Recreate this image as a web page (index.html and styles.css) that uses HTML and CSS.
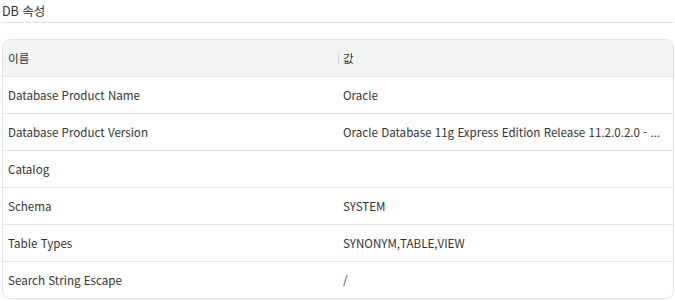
FILE: index.html
```html
<!DOCTYPE html>
<html lang="ko">
<head>
<meta charset="UTF-8">
<title>DB 속성</title>
<link rel="stylesheet" href="styles.css">
</head>
<body>
    <div class="panel">
        <div class="panel-title">DB 속성</div>
        <div class="grid-wrap">
            <table class="prop-grid">
                <thead>
                    <tr>
                        <th>이름</th>
                        <th class="col-value">값</th>
                    </tr>
                </thead>
                <tbody>
                    <tr><td>Database Product Name</td><td>Oracle</td></tr>
                    <tr><td>Database Product Version</td><td>Oracle Database 11g Express Edition Release 11.2.0.2.0 - ...</td></tr>
                    <tr><td>Catalog</td><td></td></tr>
                    <tr><td>Schema</td><td>SYSTEM</td></tr>
                    <tr><td>Table Types</td><td>SYNONYM,TABLE,VIEW</td></tr>
                    <tr><td>Search String Escape</td><td>/</td></tr>
                </tbody>
            </table>
        </div>
    </div>
</body>
</html>
```

FILE: styles.css
```css
body{
    margin: 0;
    background: #ffffff;
    font-family: "Noto Sans CJK KR", "Noto Sans", sans-serif;
    font-size: 11.6px;
    color: #333333;
}
.panel{
    padding: 0 1px 0 2px;
}
.panel-title{
    height: 22px;
    line-height: 21px;
    font-size: 12.5px;
    border-bottom: 1px solid #e3e3e3;
}
.grid-wrap{
    margin-top: 16px;
    border: 1px solid #e3e3e3;
    border-radius: 8px;
    overflow: hidden;
}
.prop-grid{
    width: 100%;
    border-collapse: collapse;
    table-layout: fixed;
}
.prop-grid th,
.prop-grid td{
    height: 36px;
    padding: 0 5px;
    text-align: left;
    font-weight: normal;
    white-space: nowrap;
    border-bottom: 1px solid #e3e3e3;
}
.prop-grid th{
    background: #f2f3f5;
}
.prop-grid tbody tr:last-child td{
    border-bottom: none;
}
.col-value{
    position: relative;
}
/* 헤더 컬럼 구분선 */
.col-value::before{
    content: "";
    position: absolute;
    left: 0;
    top: 12px;
    height: 13px;
    border-left: 1px solid #d4d4d6;
}
```
